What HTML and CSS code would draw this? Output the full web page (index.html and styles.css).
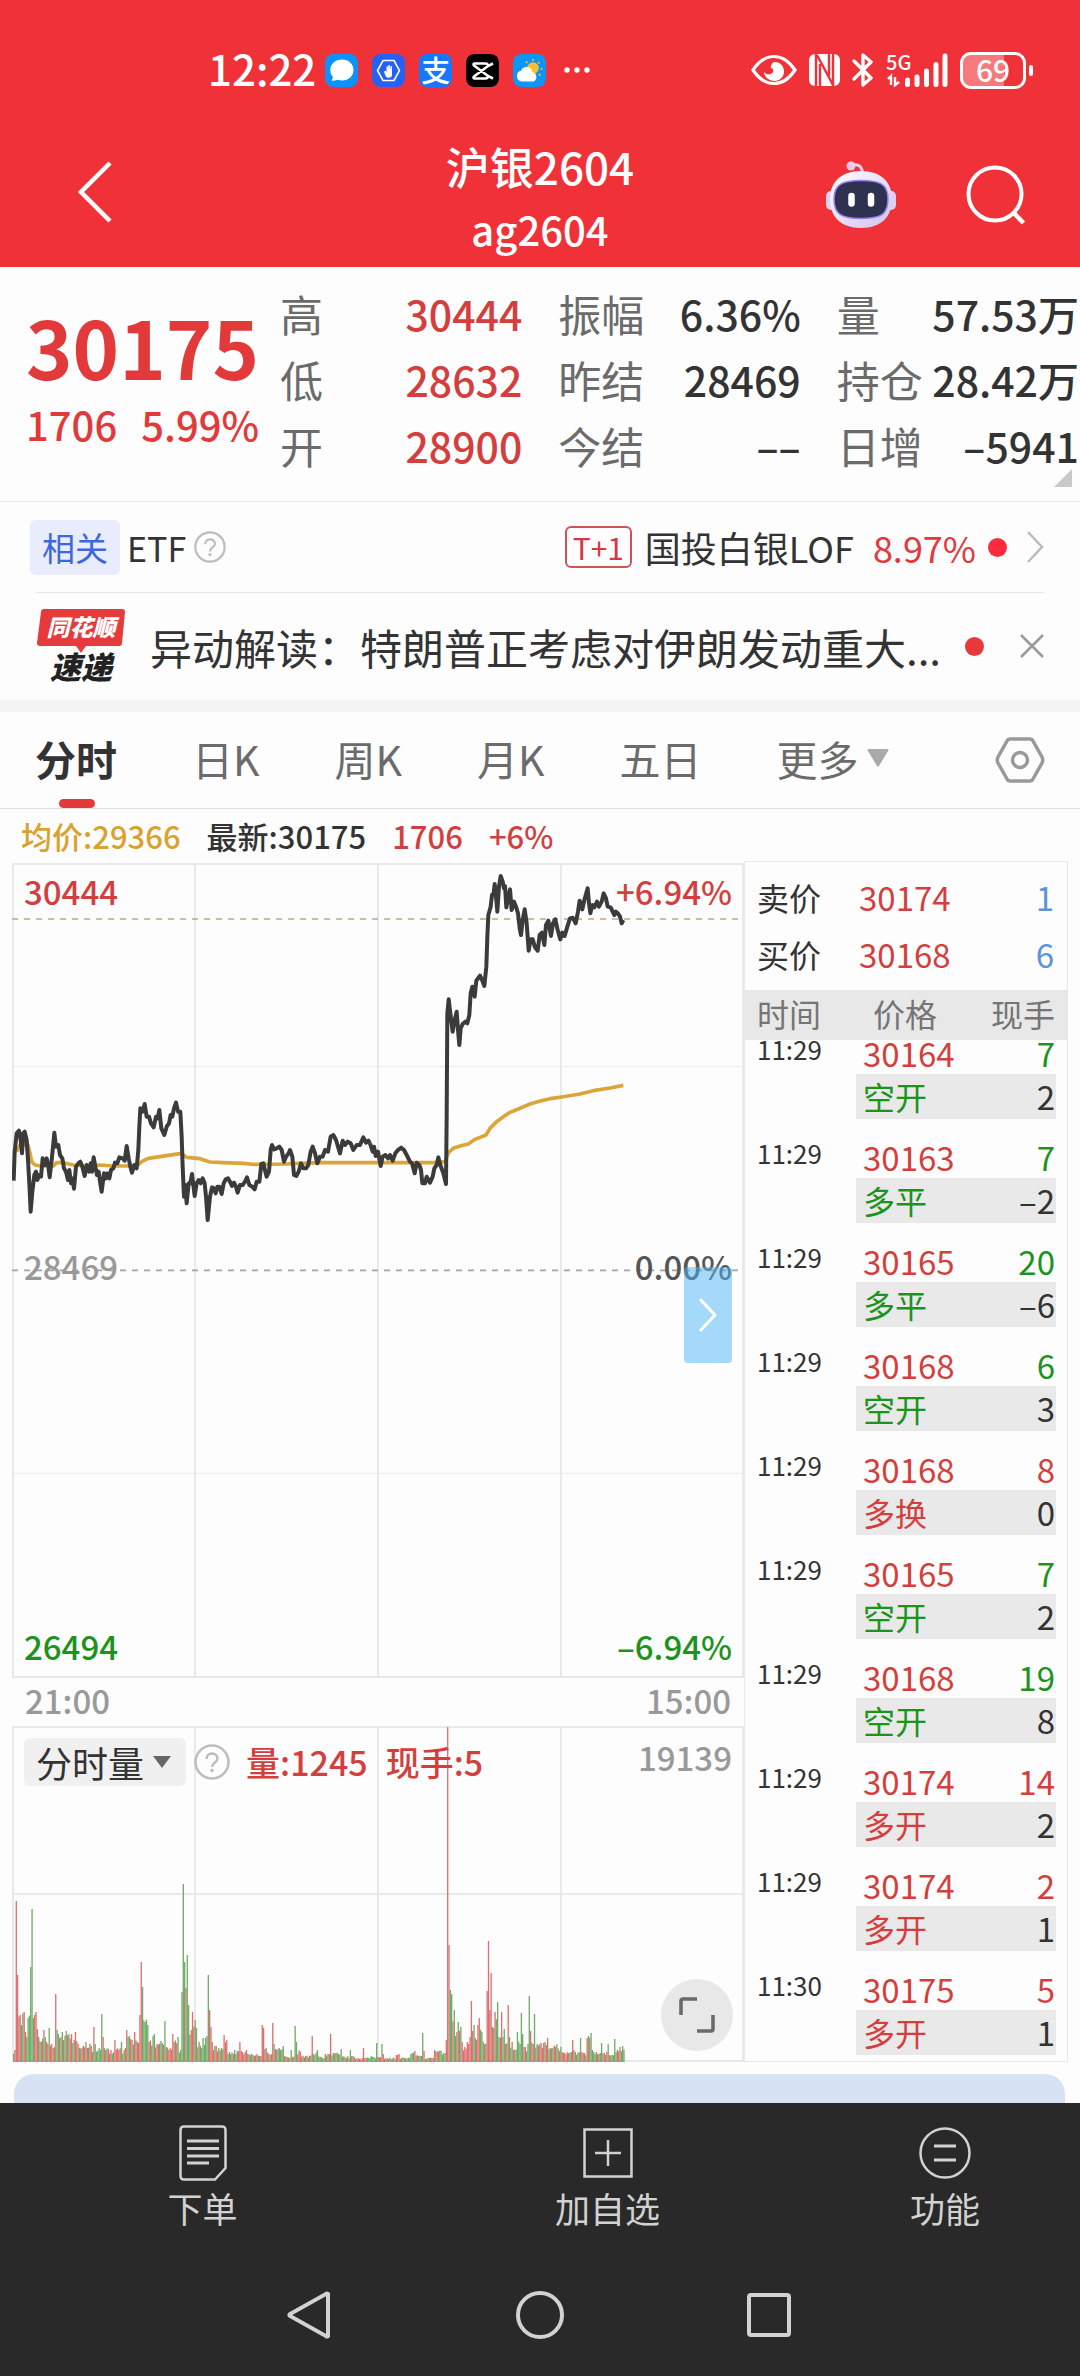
FILE: index.html
```html
<!DOCTYPE html>
<html lang="zh-CN">
<head>
<meta charset="utf-8">
<meta name="viewport" content="width=device-width, initial-scale=1">
<title>沪银2604</title>
<link rel="stylesheet" href="styles.css">
</head>
<body>
<header class="header">
  <div class="status">
    <span class="clock">12:22</span>
    <div class="apps">
      <svg class="app" viewBox="0 0 33 33"><rect width="33" height="33" rx="8" fill="#0a94fb"/><path d="M17 5.500c6.500 0 11.500 4.500 11.500 10.500S23.500 26.500 17 26.500c-1.700 0-3.200-.3-4.600-.8-1.700.9-3.600 1.300-6 1.100 1-1.200 1.500-2.500 1.400-4C6.300 21 5.300 18.700 5.300 16 5.300 10 10.500 5.500 17 5.500z" fill="#fff"/></svg>
      <svg class="app" viewBox="0 0 33 33"><rect width="33" height="33" rx="8" fill="#2461f4"/><path d="M11 6.500h11l5.500 10L22 26.500H11l-5.500-10z" fill="none" stroke="#fff" stroke-width="1.600"/><path d="M12 17.500l1.500-1 1 1.500v-5.500h1.500v4l.3-5.500h1.500l.2 5.500.6-4.500h1.400v9c0 1.800-1.500 2.800-3.500 2.800-2.200 0-3-1.300-4.500-6.300z" fill="#fff"/></svg>
      <span class="app app-pay">支</span>
      <svg class="app" viewBox="0 0 33 33"><rect width="33" height="33" rx="8" fill="#000"/><path d="M27 9.500L22 12 8 22.500c-1 1-.5 2 .8 2h10.500c2 0 2.700-.8 2.700-2.500M27 24.500L22 22 8 11.500c-1-1-.5-2 .8-2h10.500c2 0 2.700.8 2.700 2.500" fill="none" stroke="#fff" stroke-width="2.600"/></svg>
      <svg class="app" viewBox="0 0 33 33"><rect width="33" height="33" rx="8" fill="#0c97f7"/><circle cx="20" cy="14" r="5.800" fill="#fbc02d"/><path d="M20 5v2M13 7.500l1.200 1.600M26.500 8l-1.500 1.500M27.500 15h2M26 20l1.500 1.500" stroke="#fbc02d" stroke-width="1.600"/><path d="M9 27.500a5.500 5.500 0 01-1-10.800 6 6 0 0111.500 1.500A4.800 4.800 0 0120 27.500z" fill="#fff"/></svg>
      <svg class="dots" viewBox="0 0 26 6"><circle cx="3" cy="3" r="2.700"/><circle cx="13" cy="3" r="2.700"/><circle cx="23" cy="3" r="2.700"/></svg>
    </div>
    <div class="signals">
      <svg width="46" height="32" viewBox="0 0 46 32"><path d="M2 16C8 7 15 2.500 23 2.500S38 7 44 16c-6 9-13 13.500-21 13.500S8 25 2 16z" fill="none" stroke="#fff" stroke-width="3.200"/><path d="M24 8c5 0 9 4 9 9.500S28.500 27 23.500 27 13 23 13 18c2 2.500 5 3 7.500 1.500 3.500-2.200 1.500-5-1-6C20.500 9.500 22 8 24 8z" fill="#fff"/></svg>
      <svg width="31" height="32" viewBox="0 0 31 32"><rect width="31" height="32" rx="6" fill="#fff"/><path d="M7 0v32M24 0v32M8 1l16 30M11 10v22M20 0v22" stroke="#f03238" stroke-width="2.400" fill="none"/></svg>
      <svg width="22" height="34" viewBox="0 0 22 34"><path d="M2 8l17 17-8 7V2l8 7L2 26" fill="none" stroke="#fff" stroke-width="3.400" stroke-linejoin="round" stroke-linecap="round"/></svg>
      <svg class="cell" width="62" height="38" viewBox="0 0 62 38"><text class="net" x="0" y="19">5G</text><path d="M2 28l3-3v9M9 26v8l4-3" fill="none" stroke="#fff" stroke-width="2.400"/><path d="M21.500 29v4.500M31 26v7.500M40.500 20v13.500M50 13.500v20M59 5v28.500" stroke="#fff" stroke-width="5" stroke-linecap="round"/></svg>
      <span class="battery">69</span>
    </div>
  </div>
  <div class="titlebar">
    <button class="icon-button back" aria-label="返回"><svg width="36" height="64" viewBox="0 0 36 64"><path d="M33 3L4 32l29 29" fill="none" stroke="#fff" stroke-width="4.500"/></svg></button>
    <div class="titles"><h1>沪银2604</h1><p>ag2604</p></div>
    <div class="actions">
      <button class="icon-button" aria-label="助手"><svg width="72" height="74" viewBox="0 0 72 74"><defs><linearGradient id="shell" x1="0" y1="0" x2="1" y2="1"><stop offset="0" stop-color="#fff"/><stop offset="1" stop-color="#cfc3ee"/></linearGradient></defs><circle cx="26" cy="8" r="4.500" fill="#e2c8ea"/><path d="M27 7c7-1.500 10 2 10.500 8" fill="none" stroke="#efd3ea" stroke-width="3"/><rect x="1" y="33" width="12" height="19" rx="5" fill="#ddd0f2"/><rect x="59" y="33" width="12" height="19" rx="5" fill="#ddd0f2"/><path d="M36 13c20 0 31 11 31 28S57 70 36 70 5 58 5 41s11-28 31-28z" fill="url(#shell)"/><path d="M36 22.500c18 0 27 3 27 18.500S56 60.500 36 60.500 9 56 9 41s9-18.500 27-18.500z" fill="#2f3150" stroke="#9a80e8" stroke-width="1.500"/><path d="M26.500 38v7.500M46 38v7.500" stroke="#fff" stroke-width="6.500" stroke-linecap="round"/></svg></button>
      <button class="icon-button" aria-label="搜索"><svg width="60" height="60" viewBox="0 0 60 60"><circle cx="29" cy="29" r="26.500" fill="none" stroke="#fff" stroke-width="4"/><path d="M47 47l10.500 11" stroke="#fff" stroke-width="4.500"/></svg></button>
    </div>
  </div>
</header>

<main>
  <section class="quote">
    <div class="last"><strong>30175</strong><p><span>1706</span><span>5.99%</span></p></div>
    <dl class="stats">
      <div><dt>高</dt><dd class="up">30444</dd></div><div><dt>振幅</dt><dd>6.36%</dd></div><div><dt>量</dt><dd>57.53万</dd></div>
      <div><dt>低</dt><dd class="up">28632</dd></div><div><dt>昨结</dt><dd>28469</dd></div><div><dt>持仓</dt><dd>28.42万</dd></div>
      <div><dt>开</dt><dd class="up">28900</dd></div><div><dt>今结</dt><dd>––</dd></div><div><dt>日增</dt><dd>–5941</dd></div>
    </dl>
    <svg class="corner" width="18" height="18" viewBox="0 0 18 18"><path d="M18 0v18H0z" fill="#c9c9c9"/></svg>
  </section>

  <section class="related">
    <span class="tag">相关</span><span class="etf">ETF</span>
    <svg class="help" width="32" height="32" viewBox="0 0 36 36"><use href="#help"/></svg>
    <a class="fund" href="#fund"><span class="t1">T+1</span><span class="fund-name">国投白银LOF</span><span class="fund-pct">8.97%</span><i class="dot"></i>
    <svg width="18" height="34" viewBox="0 0 18 34"><path d="M2 2l14 15L2 32" fill="none" stroke="#bbb" stroke-width="2.500"/></svg></a>
  </section>

  <section class="news">
    <div class="brand">
      <svg class="bubble" viewBox="0 0 88 44"><path d="M7 0h78q3 0 3 3l-3 31q0 3-3 3H49l-5 7-5-7H3q-3 0-3-3L4 3q0-3 3-3z" fill="#e63a3c"/></svg>
      <span class="brand-top">同花顺</span><span class="brand-bottom">速递</span>
    </div>
    <a class="headline" href="#news">异动解读：特朗普正考虑对伊朗发动重大...</a>
    <i class="dot"></i>
    <button class="icon-button" aria-label="关闭"><svg width="24" height="24" viewBox="0 0 24 24"><path d="M1 1l22 22M23 1L1 23" stroke="#999" stroke-width="2.500"/></svg></button>
  </section>

  <nav class="tabs">
    <button class="tab active">分时</button><button class="tab">日K</button><button class="tab">周K</button><button class="tab">月K</button><button class="tab">五日</button>
    <button class="tab">更多<svg width="22" height="18" viewBox="0 0 22 18"><path d="M1 0h20q1 1 0 2L12 17q-1 1-2 0L1 2q-1-1 0-2z" fill="#aaa"/></svg></button>
    <button class="icon-button settings" aria-label="设置"><svg width="50" height="48" viewBox="0 0 50 48"><path d="M15 3h20q2 0 3 2l9 16q1.500 3 0 6l-9 16q-1 2-3 2H15q-2 0-3-2L3 27q-1.500-3 0-6l9-16q1-2 3-2z" fill="none" stroke="#999" stroke-width="3.500"/><circle cx="25" cy="24" r="7.500" fill="none" stroke="#999" stroke-width="3.500"/></svg></button>
  </nav>

  <p class="legend"><span class="avg">均价:29366</span><span>最新:30175</span><span class="up">1706</span><span class="up">+6%</span></p>

  <div class="board">
    <div class="charts">
      <div class="price-chart">
        <svg class="plot" viewBox="36 39 2196 2445" preserveAspectRatio="none">
          <g fill="none" stroke="#e9e9e9" stroke-width="6"><path d="M39 42h2190v2439H39zM585 42v2439M1134 42v2439M1683 42v2439"/><path stroke-width="3" d="M39 650h2190M39 1870h2190"/></g>
          <path d="M36 207h2178" stroke="#c4a57c" stroke-width="5" stroke-dasharray="18 18"/>
          <path d="M36 1261h2178" stroke="#a3a3a3" stroke-width="5" stroke-dasharray="18 18"/>
          <g fill="none" stroke="#dba53a" stroke-width="11" stroke-linejoin="round">
            <polyline points="50,905 60,885 84,885 90,910 95,935 105,945 125,948 160,948 170,938 190,938 220,945 260,948 300,945 340,948 410,948 425,935 445,925 480,920 520,914 545,910 560,922 600,926 630,936 670,938 730,940 760,943 860,942 900,940 960,938 1110,938"/>
            <polyline transform="translate(1110 0)" points="0,938 200,938 225,935 235,908 250,895 270,888 295,882 315,868 348,855 360,835 380,815 400,800 420,787 445,777 480,762 510,753 540,746 575,741 630,732 670,722 720,714 760,706"/>
          </g>
          <g fill="none" stroke="#3b3b3b" stroke-width="12" stroke-linejoin="round">
            <polyline points="41,992 44,905 50,850 57,842 62,870 66,910 70,850 74,845 80,870 84,930 88,1000 92,1085 97,1025 103,975 108,965 112,990 118,975 123,980 128,925 135,945 140,925 145,950 149,982 155,930 160,880 163,848 168,890 175,885 180,915 187,925 192,955 198,965 204,990 208,960 213,1000 217,985 222,1016 228,950 235,940 241,935 247,950 254,978 260,945 267,965 272,940 276,965 281,922 286,950 291,975 296,965 300,995 305,1025 312,970 318,985 322,970 328,985 333,960 340,955 345,938 352,940 358,922 368,925 374,932 380,888 386,925 391,950 396,968 403,945 410,955 415,900 418,830 421,775 428,785 434,762 440,800 447,800 453,820 461,832 468,800 473,805 478,780 484,835 493,855 500,830 507,820 512,795 517,800 522,775 528,758 534,785 541,785 545,860 548,950 552,1040 556,1005 560,1060 566,1000 571,1000 576,972 584,1038 590,1000 596,990 602,1000 608,985 614,1000 618,1040 623,1110 630,1040 636,1012 641,1015 647,1030 652,1010 658,1010 665,1032 671,1000 677,988 684,985 690,995 696,1008 702,998 708,1010 713,1028 720,1005 728,1005 735,995 741,982 748,1005 757,1010 764,1018 770,995 778,995 784,942 790,940 796,965 800,980 807,965 812,900 816,885 822,898 830,895 838,890 845,900 852,935 858,920 866,910 870,900 877,920 882,975 889,978 896,965 903,940 910,955 918,955 925,945 932,905 938,890 945,910 952,940 960,920 968,920 975,900 984,905 992,860 1000,855 1008,870 1014,890 1020,910 1028,872 1035,885 1043,875 1052,880 1060,900 1070,885 1080,885 1090,862 1098,878 1105,872 1110,880"/>
            <polyline transform="translate(1110 0)" points="0,880 8,905 12,890 17,918 24,905 32,948 38,920 46,915 54,925 60,915 68,932 76,910 84,900 94,893 102,900 110,915 120,935 126,940 134,970 140,938 148,945 153,960 157,1000 165,1000 170,980 180,998 188,980 193,955 200,945 205,922 211,945 220,970 228,1002 230,800 232,490 236,448 241,490 248,545 254,510 260,485 264,540 268,585 272,535 278,522 286,515 292,520 298,495 302,430 307,410 314,440 319,392 324,385 330,377 337,392 343,408 349,350 352,260 355,195 362,170 366,135 371,130 374,102 379,150 382,185 387,110 392,78 398,95 402,115 405,108 409,172 414,145 420,118 425,180 432,155 438,170 444,190 449,235 453,255 458,210 464,178 470,220 476,302 482,268 488,268 495,292 503,302 509,255 516,248 523,285 528,225 535,212 543,258 549,220 556,208 563,240 571,268 577,248 584,258 592,230 600,205 608,203 617,220 624,185 629,152 637,178 643,150 653,115 657,160 661,190 667,165 673,172 681,155 687,170 695,155 701,130 708,145 713,170 722,172 728,185 733,195 738,185 745,192 750,200 755,220 760,210"/>
          </g>
        </svg>
        <div class="scale">
          <p class="up"><span>30444</span><span>+6.94%</span></p>
          <p class="mid"><span>28469</span><span class="zero">0.00%</span></p>
          <p class="down"><span>26494</span><span>–6.94%</span></p>
        </div>
        <button class="handle" aria-label="收起"><svg width="18" height="34" viewBox="0 0 18 34"><path d="M1 1l15 16L1 33" fill="none" stroke="#fff" stroke-width="3"/></svg></button>
      </div>
      <p class="times"><span>21:00</span><span>15:00</span></p>
      <div class="volume-chart">
        <svg class="plot" viewBox="12 1726 732 336" preserveAspectRatio="none">
          <path fill="none" stroke="#e9e9e9" stroke-width="2" d="M13 1727h730v334H13zM195 1727v334M378 1727v334M561 1727v334M13 1894h730"/>
          <g id="bars"></g>
        </svg>
        <div class="volume-head">
          <button class="picker">分时量<svg width="18" height="12" viewBox="0 0 18 12"><path d="M0 0h18l-9 12z" fill="#666"/></svg></button>
          <svg class="help" width="36" height="36" viewBox="0 0 36 36"><g id="help"><circle cx="18" cy="18" r="16.500" fill="none" stroke="#bdbdbd" stroke-width="2.500"/><path d="M12.500 15c0-3.500 2.500-5.500 5.500-5.500s5.500 2 5.500 5c0 4-5.500 4-5.500 8.500" fill="none" stroke="#bdbdbd" stroke-width="2.500"/><circle cx="18" cy="26.500" r="1.800" fill="#bdbdbd"/></g></svg>
          <span class="up">量:1245</span><span class="up">现手:5</span><span class="max">19139</span>
        </div>
        <button class="expand" aria-label="全屏"><svg width="36" height="36" viewBox="0 0 36 36"><path d="M2 18V4q0-2 2-2h14M34 18v14q0 2-2 2H18" fill="none" stroke="#6a6a6a" stroke-width="3.600"/></svg></button>
      </div>
    </div>

    <aside class="tape">
      <dl class="bidask">
        <div><dt>卖价</dt><dd class="up">30174</dd><dd class="lots">1</dd></div>
        <div><dt>买价</dt><dd class="up">30168</dd><dd class="lots">6</dd></div>
      </dl>
      <div class="trades">
        <table>
          <thead><tr><th class="c-time">时间</th><th class="c-price">价格</th><th class="c-lots">现手</th></tr></thead>
          <tbody>
            <tr class="deal"><td>11:29</td><td class="up">30164</td><td class="down">7</td></tr><tr class="kind"><td></td><td class="down">空开</td><td>2</td></tr>
            <tr class="deal"><td>11:29</td><td class="up">30163</td><td class="down">7</td></tr><tr class="kind"><td></td><td class="down">多平</td><td>–2</td></tr>
            <tr class="deal"><td>11:29</td><td class="up">30165</td><td class="down">20</td></tr><tr class="kind"><td></td><td class="down">多平</td><td>–6</td></tr>
            <tr class="deal"><td>11:29</td><td class="up">30168</td><td class="down">6</td></tr><tr class="kind"><td></td><td class="down">空开</td><td>3</td></tr>
            <tr class="deal"><td>11:29</td><td class="up">30168</td><td class="up">8</td></tr><tr class="kind"><td></td><td class="up">多换</td><td>0</td></tr>
            <tr class="deal"><td>11:29</td><td class="up">30165</td><td class="down">7</td></tr><tr class="kind"><td></td><td class="down">空开</td><td>2</td></tr>
            <tr class="deal"><td>11:29</td><td class="up">30168</td><td class="down">19</td></tr><tr class="kind"><td></td><td class="down">空开</td><td>8</td></tr>
            <tr class="deal"><td>11:29</td><td class="up">30174</td><td class="up">14</td></tr><tr class="kind"><td></td><td class="up">多开</td><td>2</td></tr>
            <tr class="deal"><td>11:29</td><td class="up">30174</td><td class="up">2</td></tr><tr class="kind"><td></td><td class="up">多开</td><td>1</td></tr>
            <tr class="deal"><td>11:30</td><td class="up">30175</td><td class="up">5</td></tr><tr class="kind"><td></td><td class="up">多开</td><td>1</td></tr>
          </tbody>
        </table>
      </div>
    </aside>
  </div>
  <div class="sheet"></div>
</main>

<footer class="footer">
  <div class="toolbar">
    <button><svg width="48" height="56" viewBox="0 0 48 56"><path d="M5 1.500h38q3.500 0 3.500 3.500v38L36 54.500H5q-3.500 0-3.500-3.500V5q0-3.500 3.500-3.500z"/><path stroke-width="3" d="M8 16h32M8 23.500h32M8 31h32M8 38h22"/></svg>下单</button>
    <button><svg width="50" height="50" viewBox="0 0 50 50"><path d="M1.500 1.500h47v47h-47zM12 25h26M25 12v26"/></svg>加自选</button>
    <button><svg width="52" height="52" viewBox="0 0 52 52"><circle cx="26" cy="26" r="24.500"/><path stroke-width="3" d="M15 19h22M15 33h22"/></svg>功能</button>
  </div>
  <div class="system">
    <button aria-label="后退"><svg width="48" height="48" viewBox="0 0 48 48"><path d="M42 3v42q-1 1-2 0L4 25q-1-1 0-2L40 3q1-1 2 0z"/></svg></button>
    <button aria-label="主页"><svg width="48" height="48" viewBox="0 0 48 48"><circle cx="24" cy="24" r="22"/></svg></button>
    <button aria-label="最近任务"><svg width="48" height="48" viewBox="0 0 48 48"><rect x="3" y="4" width="40" height="40" rx="2"/></svg></button>
  </div>
</footer>
<script src="script.js"></script>
</body>
</html>
```

FILE: styles.css
```css
* { box-sizing: border-box; margin: 0; padding: 0; }

body {
  display: flex;
  flex-direction: column;
  min-height: 100vh;
  background: #fdfdfd;
  color: #333;
  font-family: "Noto Sans CJK SC", "Noto Sans", sans-serif;
  overflow-x: hidden;
}

button { border: 0; background: none; color: inherit; font: inherit; }
a { color: inherit; text-decoration: none; }
svg { display: block; flex: none; }
.up { color: #d43f3e; }
.down { color: #1c931c; }
.icon-button { display: flex; flex: none; }
.dot { flex: none; width: 19px; height: 19px; border-radius: 50%; background: #e8383b; }

/* Header */
.header { background: #f03238; color: #fff; padding-bottom: 5px; }
.status { display: flex; align-items: center; height: 136px; padding: 4px 47px 0 208px; }
.clock { font-size: 42px; font-weight: 500; line-height: 60px; margin-right: 9px; padding-bottom: 4px; }
.apps { display: flex; align-items: center; gap: 14px; }
.app { width: 33px; height: 33px; border-radius: 8px; }
.app-pay { background: #1677ff; font-size: 29px; font-weight: 500; line-height: 31px; text-align: center; }
.dots { width: 26px; height: 6px; fill: #fff; margin-left: 4px; }
.signals { display: flex; align-items: center; gap: 12px; margin-left: auto; }
.cell { overflow: visible; }
.net { font-size: 20px; font-weight: 500; fill: #fff; }
.battery {
  position: relative;
  width: 66px;
  height: 37px;
  margin-right: 7px;
  border: 3px solid #fff;
  border-radius: 11px;
  background: linear-gradient(to right, #f6797c 68%, transparent 68%);
  font-size: 30px;
  font-weight: 500;
  line-height: 29px;
  text-align: center;
}
.battery::after {
  content: "";
  position: absolute;
  right: -10px;
  top: 10px;
  width: 4px;
  height: 11px;
  border-radius: 2px;
  background: #fff;
}
.titlebar { display: grid; grid-template-columns: 1fr auto 1fr; align-items: center; }
.back { padding: 0 0 14px 77px; }
.titles { text-align: center; }
.titles h1 { font-size: 44px; font-weight: 500; line-height: 60px; }
.titles p { font-size: 40px; font-weight: 500; line-height: 66px; }
.actions { display: flex; align-items: center; justify-content: flex-end; gap: 69px; padding: 0 54px 8px 0; }

/* Quote */
.quote { position: relative; display: flex; padding: 13px 1px 23px 26px; border-bottom: 1px solid #e6e6e6; }
.last { width: 254px; padding-top: 17px; color: #e23a3a; white-space: nowrap; }
.last strong { display: block; font-size: 79px; font-weight: 700; line-height: 98px; }
.last p { display: flex; gap: 24px; font-size: 40px; font-weight: 500; line-height: 58px; }
.stats { flex: 1; display: grid; grid-template-columns: repeat(3, 1fr); column-gap: 36px; line-height: 66px; white-space: nowrap; }
.stats div { display: flex; justify-content: space-between; }
.stats dt { font-size: 43px; color: #6b6b6b; }
.stats dd { font-size: 41px; font-weight: 500; }
.corner { position: absolute; right: 8px; bottom: 14px; }

/* Related fund */
.related { display: flex; align-items: center; height: 90px; padding: 0 36px 0 30px; font-size: 36px; white-space: nowrap; }
.tag { padding: 0 12px; border-radius: 6px; background: #e8ecfc; color: #3f67dd; font-size: 33px; line-height: 55px; }
.etf { font-size: 34px; margin: 0 8px 0 7px; }
.fund { display: flex; align-items: center; margin-left: auto; }
.t1 { width: 67px; border: 2px solid #cf5257; border-radius: 6px; color: #d8383f; font-size: 30px; line-height: 38px; text-align: center; }
.fund-name { margin: 0 19px 0 13px; }
.fund-pct { color: #e2383f; margin-right: 12px; }
.fund .dot { margin-right: 19px; background: #fb2c3c; }

/* News */
.news { display: flex; align-items: center; height: 108px; padding-right: 36px; margin-left: 36px; }
.news::before { content: ""; align-self: flex-start; width: calc(100vw - 72px); margin-right: calc(72px - 100vw); border-top: 1px solid #e6e6e6; }
.brand { position: relative; width: 88px; height: 74px; margin: 0 25px 0 1px; font-weight: 900; font-style: italic; text-align: center; }
.bubble { position: absolute; inset: 0 0 auto; width: 88px; height: 44px; }
.brand-top { position: relative; display: block; color: #fff; font-size: 23px; line-height: 35px; }
.brand-bottom { display: block; color: #222; font-size: 31px; line-height: 43px; }
.headline { flex: 1; font-size: 42px; white-space: nowrap; }
.news .dot { margin-right: 36px; }

/* Tabs */
.tabs { display: flex; align-items: stretch; gap: 75px; height: 109px; padding: 0 35px; border-top: 12px solid #f3f3f3; border-bottom: 1px solid #e0e0e0; white-space: nowrap; }
.tab { position: relative; display: flex; align-items: center; gap: 8px; padding-bottom: 4px; color: #6b6b6b; font-size: 41px; }
.active { color: #333; font-weight: 700; }
.active::after { content: ""; position: absolute; left: 24px; right: 22px; bottom: 0; height: 9px; border-radius: 5px; background: #e4393b; }
.settings { align-items: center; margin-left: auto; }

.legend { display: flex; gap: 26px; padding: 0 21px; font-size: 31px; font-weight: 500; line-height: 54px; height: 54px; }
.avg { color: #dba12f; }

/* Board */
.board { display: grid; grid-template-columns: minmax(0, 1fr) 324px; padding: 0 12px; }
.charts { font-size: 33px; font-weight: 500; line-height: 40px; }
.plot { position: absolute; inset: 0; width: 100%; height: 100%; }
.price-chart { position: relative; height: 815px; }
.scale { position: relative; display: flex; flex-direction: column; justify-content: space-between; height: 100%; padding: 8px 12px 12px; }
.scale p, .times { display: flex; justify-content: space-between; }
.mid { color: #999; padding-bottom: 5px; }
.zero { color: #555; }
.handle { position: absolute; right: 12px; top: 404px; display: flex; align-items: center; justify-content: center; width: 48px; height: 96px; border-radius: 4px; background: rgba(77, 182, 247, .5); }
.times { height: 48px; padding: 2px 13px 0; color: #999; }
.volume-chart { position: relative; height: 336px; }
.volume-head { position: relative; display: flex; align-items: center; padding: 12px 12px 0; font-size: 34px; line-height: 48px; }
.picker { display: flex; align-items: center; gap: 9px; width: 162px; padding-left: 12px; border-radius: 6px; background: #f0f0f0; font-size: 36px; font-weight: 400; }
.volume-head .help { margin: 0 16px 0 8px; }
.volume-head .up { margin-right: 18px; }
.max { margin-left: auto; padding-bottom: 10px; color: #999; font-size: 33px; line-height: 38px; }
.expand { position: absolute; right: 11px; bottom: 11px; display: flex; align-items: center; justify-content: center; width: 72px; height: 72px; border-radius: 50%; background: #e8e8e8; }

/* Trades */
.tape { display: flex; flex-direction: column; height: 1201px; margin-top: -2px; border: 1px solid #e9e9e9; font-size: 33px; }
.bidask { flex: none; height: 128px; padding: 7px 13px 0 12px; line-height: 57px; }
.bidask div { display: grid; grid-template-columns: 102px 1fr auto; }
.bidask dt { font-size: 32px; }
.lots { color: #5a94dc; }
.trades { flex: 1; min-height: 0; display: flex; flex-direction: column-reverse; overflow-y: auto; scrollbar-width: none; padding-bottom: 6px; }
table { flex: none; width: 100%; border-spacing: 0; table-layout: fixed; }
.c-time { width: 111px; }
.c-lots { width: 103px; }
th { position: sticky; top: 0; z-index: 1; height: 50px; background: #e8e8e8; color: #757575; font-size: 32px; font-weight: 400; line-height: 46px; text-align: left; vertical-align: top; }
th:first-child, td:first-child { padding-left: 12px; }
.c-price { padding-left: 17px; }
th:last-child, td:last-child { text-align: right; padding-right: 1px; border-right: 11px solid transparent; background-clip: padding-box; }
th:last-child { border-color: #e8e8e8; }
.deal td { height: 59px; vertical-align: bottom; line-height: 42px; }
.deal td:first-child { font-size: 26px; line-height: 50px; }
td:nth-child(2) { padding-left: 7px; }
.kind td { height: 45px; line-height: 45px; }
.kind td + td { background-color: #e9e9e9; }
.kind td:nth-child(2) { font-size: 32px; }
.sheet { height: 29px; margin: 12px 15px 0 14px; border-radius: 20px 20px 0 0; background: #d7e3f4; }

/* Footer */
.footer { flex: 1; background: #292929; color: #d2d2d2; }
.footer svg { fill: none; stroke: #d2d2d2; stroke-width: 2.5; }
.toolbar { display: grid; grid-template-columns: 3fr 3fr 2fr; padding-top: 20px; }
.toolbar button { display: grid; grid-template-rows: 60px 50px; place-items: center; font-size: 35px; line-height: 50px; }
.system { display: flex; justify-content: center; gap: 182px; padding: 58px 0 20px; }
.system svg { stroke-width: 4; }
```

FILE: script.js
```js
// Minute volume: position on the axis, bar height, and r/g for an up or down minute.
const samples = `14 12r,15 161r,16.5 87r,17.5 50r,19 47r,20.5 37g,21.5 63g,23 50r,24.5 30r,26 25g,28 44g,29.5 95g,31 153g,32 65r,33.5 47r,35 50r,37 33r,38.5 25g,40 20r,43 32r,45 25g,47 18r,49 34g,51 18r,53 14r,54.5 68r,56 32g,58 28g,60 25g,62 30g,65 31g,68 28g,71 28r,74 22g,75 30r,78 18r,82 14r,86 20g,90 16r,92 10g,93.5 35r,95 18g,98 14g,100 12g,101.5 48g,103 25r,105 12r,110 12r,114 22r,118 12r,121 20g,124 12g,126 32r,128 25g,131 22r,134.500 30r,137 20r,139 47r,141 100r,142.500 75g,144 40g,145 45r,147 37g,149 20r,152 26g,154 28g,157 18r,160 21g,162 19g,164 41g,165.500 15r,168 12r,172 28r,174 20r,177 25g,180 12g,181.500 70g,183 178g,184 100g,185.500 74r,187 107g,188 57g,190 32r,192 50r,194 42g,196 34g,198 20r,201 14g,203 24g,206 26g,207.500 87g,209 52r,210.500 35r,212 20r,215 16r,218 14g,221 14g,224 27r,226 22r,229 10g,234 12g,237 11g,239 20r,241 11r,246 12r,250 7g,256 8r,260 6r,261 37r,262.500 34r,265 14g,268 8r,270.500 8r,272 39r,273 18g,276 12g,280 12g,283 16g,287 5r,290 12g,292.500 5g,294 36g,296 20g,300 10r,305 6g,309.500 6r,311 26r,312.500 8g,317 12g,321 5g,325 8r,329 8r,330.500 28r,332 9g,338 8g,340 13g,344 5g,350 12g,354 5g,361 4r,363 14r,364.500 4r,371 6g,374 5g,375.500 19g,377 5r,381 18g,382.500 8r,386 4r,396 7r,399 8r,404 4g,410 8g,414 11r,418 6g,421 6g,422.500 29g,424 11r,430 4r,434 12r,440 11g,444 9g,446 22r,447.300 335r,448.600 117r,450 72g,451.300 68g,453 52g,454 42r,456 30r,458 40g,460 35g,462 20r,464 15r,467 20r,469 25r,471 61r,473 37g,475 24g,477 37r,479 44r,481 30g,484 18r,486.500 71r,488 121r,489.500 52r,490.500 89r,492 35r,493.500 34g,495 50r,497 60g,498 25g,501 50r,502.500 25g,503.500 33g,505 18r,507.500 57r,509 25g,512 20r,515 12g,517 30g,519 18g,520.500 49g,522 28g,524 15r,527 18g,528.500 66g,530 31r,532 18r,534 48g,536 18g,541 19r,544 20g,547 24r,550 14g,555 15r,560 15g,563 9r,570 9r,572 22r,575 10g,580 24g,583 9r,587 24r,590 29g,592 12g,596 10r,600 9g,601 19g,604 9r,608 18g,611 7g,614 23g,617 12g,620 15r,623 22r`
  .split(",")
  .map((s) => {
    const [x, bar] = s.split(" ");
    return { x: Number(x), h: parseInt(bar, 10), up: bar.endsWith("r") };
  });

const bottom = 2062;
const step = 730 / 555;
const group = document.getElementById("bars");
let seed = 7;
const random = () => (seed = (seed * 16807) % 2147483647) / 2147483647;

for (let minute = 0; minute < 465; minute++) {
  const x = 13 + minute * step;
  const next = Math.max(1, samples.findIndex((s) => s.x >= x));
  const a = samples[next - 1];
  const b = samples[next];
  const near = [a, b].find((s) => Math.abs(s.x - x) <= step / 2);
  const quiet = Math.min(a.h, b.h) * (0.7 + random() * 0.5);
  const h = near ? near.h : quiet;
  const up = near ? near.up : random() < 0.5;
  const bar = document.createElementNS("http://www.w3.org/2000/svg", "rect");
  bar.setAttribute("x", x);
  bar.setAttribute("y", bottom - h);
  bar.setAttribute("width", step);
  bar.setAttribute("height", h);
  bar.setAttribute("fill", up ? "#df6f6f" : "#6fac67");
  group.append(bar);
}
```
